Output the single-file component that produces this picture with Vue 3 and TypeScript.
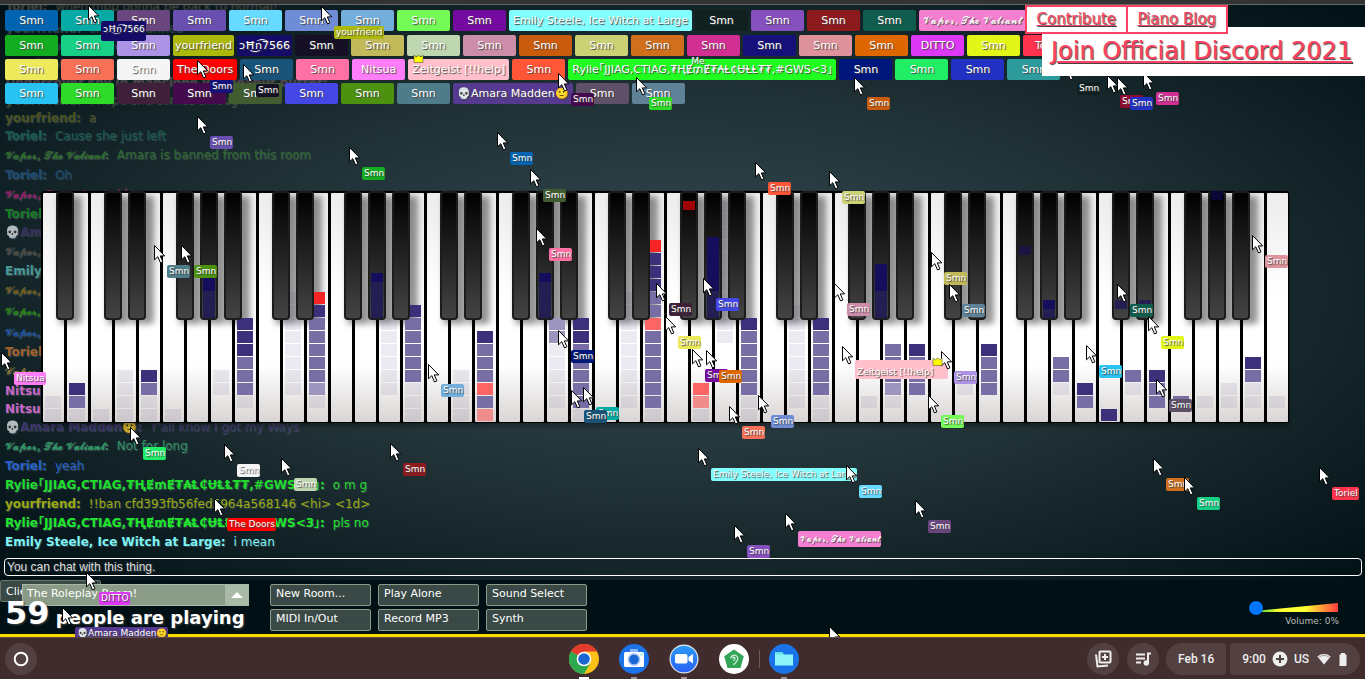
<script setup lang="ts">
interface Tag { t: string; c: string; k?: string }
interface Pointer { x: number; y: number; c?: string; t?: string; k?: string }
interface Line { n: string; m: string; c: string; k?: string }

const VAPOR = '𝓥𝓪𝓹𝓸𝓻, 𝓣𝓱𝓮 𝓥𝓪𝓵𝓲𝓪𝓷𝓽'
const RYLIE = 'Rylie｢JJIAG,CTIAG,₮ⱧɆ₥Ɇ₮₳Ⱡ₵ɄⱠⱠ₮₮,#GWS<3｣'
const EMILY = 'Emily Steele, Ice Witch at Large'
const AMARA = '💀Amara Madden🙂'
const SHN = 'ɔĦ͜n͡7566'

const smn = (list: string): Tag[] => list.split(' ').map((c) => ({ t: 'Smn', c: '#' + c }))

const rows: Tag[][] = [
  [
    ...smn('0264b0 05aaa4 6a467e 694fb0 67daff 6f8dd6 74afdb 75fb57 740aa0'),
    { t: EMILY, c: '#82ffff' },
    ...smn('10201e 8650bf 8d1a1d 0f5d4c'),
    { t: VAPOR, c: '#f47fd1', k: 'script' },
    ...smn('900b30'),
  ],
  [
    ...smn('12ad21 17cf85 ad93e5'),
    { t: 'yourfriend', c: '#acb90c', k: 'snug' },
    { t: SHN, c: '#140c66', k: 'snug' },
    ...smn('151025 c1b95a bed7b0 cb8da8 c95c0c cbd274 d1701c d22f93 15107a de939c df6700'),
    { t: 'DITTO', c: '#dd38f5' },
    ...smn('e2f718'),
    { t: 'Toriel', c: '#ff334d' },
  ],
  [
    ...smn('ece95c f87058 f5f5f5'),
    { t: 'The Doors', c: '#ff0000' },
    ...smn('195377 ff71a5'),
    { t: 'Nitsua', c: '#ff7df8' },
    { t: 'Zeitgeist [!!help]', c: '#ffc0cb', k: 'owner' },
    ...smn('ff5637'),
    { t: RYLIE, c: '#21ff21', k: 'me' },
    ...smn('00167a 21ed65 2230c4 2d9a9c'),
  ],
  [
    ...smn('28c3f2 2edb28 3e2138 450a4b 425c31 4447e6 4c9210 4e7c88'),
    { t: AMARA, c: '#553a8f' },
    ...smn('5e5167 608299'),
  ],
]

const p = (x: number, y: number, c: string, t = 'Smn', k = ''): Pointer => ({ x, y, c: '#' + c, t, k })
const pointers: Pointer[] = [
  p(88, 5, '140c66', SHN, 'tall'),
  p(321, 6, 'acb90c', 'yourfriend'),
  p(197, 60, '15107a'),
  p(243, 64, '151025'),
  p(197, 116, '694fb0'),
  p(349, 147, '12ad21'),
  p(558, 73, '450a4b'),
  p(636, 77, '2edb28'),
  p(854, 77, 'c95c0c'),
  p(497, 132, '0264b0'),
  p(530, 169, '425c31'),
  p(755, 162, 'ff5637'),
  p(829, 171, 'cbd274'),
  p(1064, 62, '10201e'),
  p(1107, 75, '900b30'),
  p(1117, 77, '2230c4'),
  p(1143, 72, 'd22f93'),
  p(154, 245, '4e7c88'),
  p(181, 245, '4c9210'),
  p(1, 352, 'ff7df8', 'Nitsua'),
  p(130, 427, '21ed65'),
  p(536, 228, 'ff71a5'),
  p(428, 364, '74afdb'),
  p(558, 330, '00167a'),
  p(583, 387, '05aaa4'),
  p(571, 390, '195377'),
  p(656, 283, '3e2138'),
  p(703, 278, '4447e6'),
  p(665, 316, 'ece95c'),
  p(692, 349, '740aa0'),
  p(706, 350, 'df6700'),
  p(729, 406, 'f87058'),
  p(758, 395, '6f8dd6'),
  p(834, 283, 'cb8da8'),
  p(842, 346, 'ffc0cb', 'Zeitgeist [!!help]', 'mod'),
  p(931, 252, 'c1b95a'),
  p(949, 284, '608299'),
  p(941, 351, 'ad93e5'),
  p(928, 395, '75fb57'),
  p(1117, 284, '0f5d4c'),
  p(1148, 316, 'e2f718'),
  p(1086, 345, '28c3f2'),
  p(1156, 379, '5e5167'),
  p(1252, 235, 'de939c'),
  p(224, 444, 'f5f5f5'),
  p(281, 458, 'bed7b0'),
  p(390, 443, '8d1a1d'),
  p(214, 498, 'ff0000', 'The Doors'),
  p(86, 572, 'dd38f5', 'DITTO'),
  p(62, 607, '553a8f', AMARA),
  p(698, 448, '82ffff', EMILY),
  p(846, 465, '67daff'),
  p(785, 513, 'f47fd1', VAPOR, 'script'),
  p(734, 525, '8650bf'),
  p(915, 500, '6a467e'),
  p(1153, 458, 'd1701c'),
  p(1184, 477, '17cf85'),
  p(1319, 467, 'ff334d', 'Toriel'),
  { x: 829, y: 626 },
]

const lines: Line[] = [
  { n: 'Toriel', m: 'when mpp gonna be back to normal!', c: 'rgba(90,75,50,.45)', k: 'gap' },
  { n: 'yourfriend', m: 'she got banned', c: 'rgba(40,110,80,.3)' },
  { n: 'Toriel', m: 'who banned her', c: 'rgba(60,70,160,.3)' },
  { n: 'yourfriend', m: 'I do not know', c: 'rgba(90,90,60,.3)' },
  { n: 'Undercover spy in manclone ver peanut butter', m: '', c: 'rgba(110,70,80,.45)' },
  { n: 'yourfriend', m: 'I hope she comes through', c: 'rgba(110,120,40,.4)' },
  { n: 'yourfriend', m: 'a', c: '#4a511c' },
  { n: 'Toriel', m: 'Cause she just left', c: '#165b50' },
  { n: VAPOR, m: 'Amara is banned from this room', c: '#2f6a2e', k: 'script' },
  { n: 'Toriel', m: 'Oh', c: '#1b4a73' },
  { n: VAPOR, m: 'I know', c: '#8b1f63', k: 'script' },
  { n: 'Toriel', m: 'ok', c: '#157d22' },
  { n: AMARA, m: 'hi', c: '#3c3368', k: 'faded' },
  { n: VAPOR, m: 'hi', c: '#4a4a42', k: 'script' },
  { n: EMILY, m: 'hi', c: '#4a9895' },
  { n: VAPOR, m: 'ok', c: '#6e5c1c', k: 'script' },
  { n: VAPOR, m: 'ok', c: '#2a8016', k: 'script' },
  { n: VAPOR, m: 'ok', c: '#22519e', k: 'script' },
  { n: 'Toriel', m: 'ok', c: '#a5602a' },
  { n: VAPOR, m: 'ok', c: '#85772f', k: 'script' },
  { n: 'Nitsua', m: 'ok', c: '#c765c4' },
  { n: 'Nitsua', m: 'ok', c: '#cb66c8' },
  { n: AMARA, m: "Y'all know I got my Ways", c: '#4a3a80', k: 'faded' },
  { n: VAPOR, m: 'Not for long', c: '#309363', k: 'script' },
  { n: 'Toriel', m: 'yeah', c: '#2561cc' },
  { n: RYLIE, m: 'o m g', c: '#1fdd2a', k: 'wide' },
  { n: 'yourfriend', m: '!!ban cfd393fb56fed5964a568146 <hi> <1d>', c: '#9ca80f' },
  { n: RYLIE, m: 'pls no', c: '#20e62b', k: 'wide' },
  { n: EMILY, m: 'i mean', c: '#7df3f4' },
]

// Note stacks per white key, listed from the bottom row upwards.
const stacks = [
  'ff', 'fmd', 'f', 'ffff', 'ffmd', 'f', '', '..ff', '.fmmmddd', '', '..ffffffff', '.flmmmmmdr',
  '', '', '..ffffff', 'fffmmmmmd', '', 'ffff', 'pmRmmmd', '', '', '.fffffll', 'fmmmmmdd', '',
  '.fffffffff', 'fmmmmmmRmmdddr', '', 'fpR', '......fffffffffff', 'ffmmmmmd', '', '.ffffffff',
  'ffmmmmmd', '', '.f', '.flmmm', '..mmmd', '', '..f', '..mmmd', '', '', '..fmm', '.md', 'd',
  '..fm', '.mmd', '.m', '.f', '.ff', '.ffmd', '.f',
]
const tone: Record<string, string> = {
  f: 'rgba(80,70,130,.11)', l: '#9c96bf', m: '#766ea4', d: '#3b3079', r: '#f62424', R: '#fb6566', p: '#f08c8c',
}
const notes = stacks.flatMap((s, i) =>
  [...s].map((ch, k) => ({ x: 4 + 24 * i, y: 219 - 13 * k, c: tone[ch] })).filter((n) => n.c),
)
const whites = Array.from({ length: 52 }, (_, i) => 2 + 24 * i)
const sharps = Array.from({ length: 51 }, (_, i) => i)
  .filter((i) => [0, 2, 3, 5, 6].includes(i % 7))
  .map((i) => 15 + 24 * i)
const LIT = '#140e5c'
const DIM = '#241f52'
const sharpNotes = [
  { i: 6, y: 88, h: 13, c: LIT }, { i: 6, y: 101, h: 27, c: DIM },
  { i: 13, y: 83, h: 9, c: LIT }, { i: 13, y: 92, h: 36, c: DIM },
  { i: 20, y: 83, h: 9, c: LIT }, { i: 20, y: 92, h: 36, c: DIM },
  { i: 26, y: 11, h: 9, c: '#a00404' },
  { i: 27, y: 47, h: 54, c: LIT }, { i: 27, y: 101, h: 27, c: DIM },
  { i: 34, y: 74, h: 27, c: LIT }, { i: 34, y: 101, h: 27, c: DIM },
  { i: 40, y: 56, h: 9, c: '#1a1440' },
  { i: 41, y: 110, h: 9, c: LIT }, { i: 41, y: 119, h: 9, c: DIM },
  { i: 44, y: 110, h: 9, c: DIM }, { i: 45, y: 110, h: 9, c: DIM },
  { i: 48, y: 1, h: 9, c: '#0a0636' },
]
const actions = ['New Room...', 'Play Alone', 'Sound Select', 'MIDI In/Out', 'Record MP3', 'Synth']
</script>

<template>
  <div class="page">
    <div class="edge"></div>
    <main class="room">
      <section class="log">
        <p v-for="(l, i) in lines" :key="i" :class="['line', l.k]" :style="{ color: l.c }">
          <b>{{ l.n }}:</b><span>{{ l.m }}</span>
        </p>
      </section>

      <section class="names">
        <div v-for="(r, i) in rows" :key="i" class="row">
          <div v-for="(n, j) in r" :key="j" :class="['name', n.k]" :style="{ background: n.c }">
            {{ n.t }}
            <svg v-if="n.k === 'owner'" class="crown" viewBox="0 0 11 9"><path d="M1 8.500V1l2.500 2L5.500.7 7.500 3 10 1v7.500z" fill="#ff0" stroke="#554" stroke-width=".6" /></svg>
            <span v-if="n.k === 'me'" class="over">Me</span>
          </div>
        </div>
      </section>

      <section class="piano">
        <svg viewBox="0 0 1250 240" role="img" aria-label="Piano keyboard">
          <defs>
            <linearGradient id="white" x1="0" y1="0" x2="0" y2="1">
              <stop offset="0" stop-color="#ececec" /><stop offset=".45" stop-color="#fff" />
              <stop offset=".75" stop-color="#fff" /><stop offset="1" stop-color="#dad5d5" />
            </linearGradient>
            <linearGradient id="black" x1="0" y1="0" x2="0" y2="1">
              <stop offset="0" stop-color="#000" /><stop offset=".5" stop-color="#222" /><stop offset="1" stop-color="#444" />
            </linearGradient>
            <filter id="soft" x="-50%" y="-10%" width="200%" height="120%"><feGaussianBlur stdDeviation="3" /></filter>
          </defs>
          <rect x="1" y="3" width="1248" height="232" rx="3" fill="#000" opacity=".45" filter="url(#soft)" />
          <rect x="0" y="1" width="1248" height="232" rx="3" fill="#000" />
          <rect v-for="x in whites" :key="x" :x="x" y="3" width="21" height="229" rx="1" fill="url(#white)" />
          <rect v-for="x in sharps" :key="x" :x="x + 3" y="6" width="23" height="128" rx="4" fill="#000" opacity=".42" filter="url(#soft)" />
          <rect v-for="(n, i) in notes" :key="i" :x="n.x" :y="n.y" width="16" height="12" :fill="n.c" />
          <rect v-for="x in sharps" :key="x" :x="x + 1" y="2" width="16" height="127" rx="3" fill="url(#black)" stroke="#1c1c1c" stroke-width="2" />
          <rect v-for="(n, i) in sharpNotes" :key="i" :x="18 + 24 * n.i" :y="n.y" width="12" :height="n.h" :fill="n.c" />
        </svg>
      </section>

      <form class="chat" @submit.prevent>
        <input type="text" value="You can chat with this thing." aria-label="Chat message" />
      </form>
    </main>

    <footer class="bottom">
      <button class="client">Client Settings</button>
      <div class="status">
        <button class="select"><span>The Roleplay Room!</span><i></i></button>
        <p><strong>59</strong> people are playing</p>
      </div>
      <div class="actions">
        <button v-for="a in actions" :key="a">{{ a }}</button>
      </div>
      <div class="volume">
        <div class="track">
          <svg viewBox="0 0 83 9" preserveAspectRatio="none">
            <defs><linearGradient id="vol"><stop offset="0" stop-color="#3c3" /><stop offset=".3" stop-color="#ff3" /><stop offset=".6" stop-color="#ff3" /><stop offset="1" stop-color="#ff3d3d" /></linearGradient></defs>
            <path d="M0 9V8L83 0V9z" fill="url(#vol)" />
          </svg>
          <input id="volume" type="range" min="0" max="100" value="0" />
        </div>
        <label for="volume">Volume: 0%</label>
      </div>
    </footer>

    <nav class="shelf">
      <button class="round" aria-label="Launcher"><svg viewBox="0 0 32 32"><circle cx="16" cy="16" r="6.300" fill="none" stroke="#fff" stroke-width="2" /></svg></button>
      <div class="apps">
        <button class="app on" aria-label="Chrome">
          <svg viewBox="0 0 30 30"><circle cx="15" cy="15" r="15" fill="#fbc116" /><path d="M15 15 2 7.500A15 15 0 0 1 28 7.500H15z" fill="#e33b2e" /><path d="M2 7.500A15 15 0 0 0 15 30l6.500-11.200L15 15z" fill="#2da94f" /><circle cx="15" cy="15" r="7.300" fill="#fff" /><circle cx="15" cy="15" r="5.800" fill="#1a67d2" /></svg>
        </button>
        <button class="app" aria-label="Camera">
          <svg viewBox="0 0 30 30"><circle cx="15" cy="15" r="15" fill="#1a73e8" /><path d="M11 5h8v4h-8z" fill="#8ab4f8" /><rect x="5" y="8" width="20" height="15" rx="1.500" fill="#fff" /><circle cx="15" cy="15.500" r="6.400" fill="#a8c7fa" /><circle cx="15" cy="15.500" r="4.800" fill="#1967d2" /><circle cx="22.500" cy="10.500" r="1" fill="#4fe3e8" /></svg>
        </button>
        <button class="app" aria-label="Zoom">
          <svg viewBox="0 0 30 30"><defs><linearGradient id="zm" x1="0" y1="0" x2="0" y2="1"><stop offset="0" stop-color="#2a9bf5" /><stop offset="1" stop-color="#2962f6" /></linearGradient></defs><circle cx="15" cy="15" r="14.500" fill="#e8e8e8" /><circle cx="15" cy="15" r="13.300" fill="url(#zm)" /><rect x="6" y="10" width="12.500" height="9.500" rx="2" fill="#fff" /><path d="m19.500 13 4.500-3v9.500l-4.500-3z" fill="#fff" /></svg>
        </button>
        <button class="app idle" aria-label="Listening">
          <svg viewBox="0 0 30 30"><circle cx="15" cy="15" r="15" fill="#fff" /><path d="m15 5.500 9.800 6.800L21.500 24h-13L5.200 12.300z" fill="#32a456" /><path d="M11.800 14.500a3.500 3.500 0 1 1 6 2.500c-1.300 1.300-1.300 3.500-3.800 3.500M13.700 14.500c.5-2 2.500-1.500 2.300.2-.2 1-1.500 1.300-1 2.300" fill="none" stroke="#d9f3e0" stroke-width="1.200" /></svg>
        </button>
        <hr />
        <button class="app" aria-label="Files">
          <svg viewBox="0 0 30 30"><circle cx="15" cy="15" r="15" fill="#1a73e8" /><path d="M6 8h7l2 2.500h9v11H6z" fill="#8ff5f9" /><path d="M6 8h7l2 2.500H6z" fill="#62dfea" /></svg>
        </button>
      </div>
      <div class="tray">
        <button class="round" aria-label="Add desk"><svg viewBox="0 0 32 32" fill="none" stroke="#eee" stroke-width="2"><rect x="12.500" y="8.500" width="11" height="11" rx="1" /><path d="M18 11v6M15 14h6M9 11.500l1.500 12 10.500-1" /></svg></button>
        <button class="round" aria-label="Media"><svg viewBox="0 0 32 32" fill="none" stroke="#eee" stroke-width="2"><path d="M9 11.500h9M9 15.500h9M9 19.500h5" /><path d="M21 20v-9.500h3" /><circle cx="19.300" cy="20" r="1.700" fill="#eee" /></svg></button>
        <button class="pill date">Feb 16</button>
        <button class="pill time"><span>9:00</span>
          <svg class="plus" viewBox="0 0 16 16"><circle cx="8" cy="8" r="7.500" fill="#eee" /><path d="M8 4v8M4 8h8" stroke="#514040" stroke-width="2" /></svg>
          <span>US</span>
          <svg class="wifi" viewBox="0 0 14 12"><path d="M7 11.500.3 3.500a10.500 10.500 0 0 1 13.400 0z" fill="#eee" /><path d="M1.500 4.500a9 9 0 0 1 11 0" fill="none" stroke="#998c8c" stroke-width=".8" /></svg>
          <svg class="battery" viewBox="0 0 8 13"><path d="M2 0h4v1.500h1.500V13H.5V1.500H2z" fill="#eee" /></svg>
        </button>
      </div>
    </nav>

    <div class="pointers">
      <div v-for="(c, i) in pointers" :key="i" class="pointer" :style="{ left: c.x + 'px', top: c.y + 'px' }">
        <svg viewBox="0 0 12 19"><path d="M.5.500v14.300l3.300-3.100 2.700 6.200 2.400-1-2.600-6h4.400z" fill="#fff" stroke="#000" /></svg>
        <span v-if="c.t" :class="c.k" :style="{ background: c.c }">{{ c.t }}</span>
      </div>
      <svg class="crown loose" viewBox="0 0 11 9"><path d="M1 8.500V1l2.500 2L5.500.7 7.500 3 10 1v7.500z" fill="#ff0" stroke="#554" stroke-width=".6" /></svg>
    </div>

    <div class="links">
      <div class="small"><a href="#contribute">Contribute</a><a href="#blog">Piano Blog</a></div>
      <a class="big" href="#discord">Join Official Discord 2021</a>
    </div>
  </div>
</template>

<style>
body { margin: 0; background: #001014; }
</style>

<style scoped>
* { box-sizing: border-box; }
p { margin: 0; }
button { font: inherit; color: inherit; border: 0; padding: 0; margin: 0; background: none; text-shadow: inherit; }
.page {
  position: relative; min-height: 100vh; display: flex; flex-direction: column; overflow: hidden;
  font-family: "DejaVu Sans", "Noto Sans", "Noto Sans CJK JP", sans-serif; color: #fff;
}
.edge { height: 5px; background: #333; border-bottom: 1px solid #666; }
.room {
  flex: 1; display: grid; grid-template-rows: minmax(0, 1fr) 22px; grid-template-columns: minmax(0, 1fr);
  background: radial-gradient(ellipse farthest-corner at center, #344b50 0%, #203136 50%, #001014 100%);
}
.log, .names, .piano { grid-area: 1 / 1; position: relative; }
.log {
  display: flex; flex-direction: column; justify-content: flex-end; height: 0; min-height: 100%;
  overflow: hidden; padding: 0 5px 7px; font-size: 12px; white-space: nowrap;
}
.line { flex: none; line-height: 18px; height: 18px; text-shadow: 1px 1px 1px rgba(140, 150, 150, .35); }
.line b { margin-right: 8px; }
.line.script { height: 21px; line-height: 21px; }
.line.script b { font-size: 10px; }
.line.gap { margin-bottom: 4px; }
.line.wide { height: 20px; line-height: 20px; }
.line.faded { opacity: .8; }
.names { padding: 5px 5px 0; display: flex; flex-direction: column; gap: 3px; align-items: flex-start; }
.row { display: flex; gap: 3px; }
.name {
  position: relative; flex: none; min-width: 53px; height: 21px; padding: 0 4px; border-radius: 2px;
  font-size: 11px; line-height: 21px; text-align: center; white-space: nowrap; text-shadow: 1px 1px 1px #444;
}
.row + .row { margin-top: 1px; }
.row + .row + .row { margin-top: 0; }
.name.snug { padding: 0 2px; }
.name.script { font-size: 10px; }
.crown { position: absolute; left: 5px; top: -5px; width: 11px; height: 9px; }
.crown.loose { left: 932px; top: 357px; }
.over { position: absolute; left: 123px; top: -7px; font-size: 9px; line-height: 18px; }
.piano { padding: 185px 74px 0 41px; }
.piano svg { display: block; width: 100%; }
.chat { grid-area: 2 / 1; padding: 0 3px 4px 4px; display: flex; }
.chat input {
  width: 100%; height: 18px; padding: 0 2px; border: 1px solid #fff; border-radius: 4px; background: none;
  font: 12px "Liberation Sans", Arial, sans-serif; color: #ddd; text-shadow: 1px 1px 1px #444;
}
.bottom { position: relative; height: 57px; display: flex; background: #001014; border-bottom: 3px solid #ffdc00; font-size: 11px; }
.client {
  position: absolute; left: 0; top: 0; width: 101px; height: 22px; padding-left: 5px; text-align: left;
  background: #3a4946; border: 1px solid #67776c; border-radius: 2px;
}
.status { position: relative; width: 249px; padding: 4px 0 0 22px; margin-right: 21px; }
.select { display: flex; width: 100%; height: 22px; background: #8a9c87; border: 1px solid #a8baa7; text-align: left; line-height: 18px; padding-left: 4px; }
.select span { flex: 1; }
.select i { width: 23px; background: #a8baa7; height: 20px; display: grid; place-items: center; }
.select i::after { content: ""; border: 6px solid transparent; border-top: 0; border-bottom-color: #fff; }
.status p { position: absolute; left: 5px; top: 13px; font-size: 18px; line-height: 40px; font-weight: bold; white-space: nowrap; text-shadow: 1px 1px 2px #444; }
.status strong { font-size: 32px; }
.actions { display: grid; grid-template-columns: repeat(3, 101px); grid-auto-rows: 22px; gap: 3px 7px; padding-top: 4px; }
.actions button { background: #3a4946; border: 1px solid #8a9c87; border-radius: 2px; text-align: left; padding: 0 5px 3px; line-height: 16px; }
.volume { margin-left: auto; width: 90px; margin-right: 26px; padding-top: 17px; font-size: 9px; color: #bbb; text-align: right; }
.volume label { display: block; line-height: 14px; }
.track { position: relative; height: 17px; }
.track svg { position: absolute; right: 1px; top: 6px; width: 83px; height: 9px; }
.track input { position: absolute; left: 0; top: 3px; width: 90px; height: 15px; margin: 0; appearance: none; background: none; }
.track input::-webkit-slider-thumb { appearance: none; width: 14px; height: 14px; border-radius: 50%; background: #0075ff; }
.shelf {
  position: relative; height: 42px; display: flex; align-items: center; justify-content: space-between; padding: 1px 5px 0;
  background: #402c2c; border-top: 1px solid #5c4a4a; font: 500 12px Roboto, sans-serif; color: #eee; z-index: 2;
}
.round { width: 32px; height: 32px; border-radius: 50%; background: #534141; }
.round svg { display: block; width: 32px; height: 32px; }
.apps { position: absolute; left: 0; right: 0; top: 0; height: 41px; padding-left: 2px; display: flex; align-items: center; justify-content: center; gap: 20px; }
.app { position: relative; width: 30px; height: 41px; display: flex; align-items: center; }
.app svg { width: 30px; height: 30px; }
.app::after { content: ""; position: absolute; left: 12px; bottom: 0; width: 6px; height: 2px; background: #9a8e8e; }
.app.on::after { left: 10px; width: 10px; background: #fff; }
.app.idle::after { display: none; }
.apps hr { width: 1px; height: 18px; margin: 0 -11px 0 -10px; border: 0; background: #6b5a5a; }
.tray { display: flex; align-items: center; gap: 4px; }
.tray .round + .round { margin: 0 3px 0 4px; }
.pill { height: 32px; background: #534141; display: flex; align-items: center; }
.date { padding: 0 12px; border-radius: 16px 4px 4px 16px; }
.time { padding: 0 13px 0 12px; gap: 6px; border-radius: 4px 16px 16px 4px; }
.plus { width: 16px; height: 16px; }
.wifi { width: 14px; height: 12px; margin-left: 2px; }
.battery { width: 8px; height: 13px; margin-left: 2px; }
.pointers { position: absolute; inset: 0 0 42px; overflow: hidden; z-index: 1; pointer-events: none; }
.pointer { position: absolute; }
.pointer svg { position: absolute; left: 0; top: 0; width: 12px; height: 19px; }
.pointer span {
  position: absolute; left: 13px; top: 20px; height: 13px; padding: 0 1px 0 2px; border-radius: 2px;
  font-size: 9px; line-height: 13px; white-space: nowrap; text-shadow: 1px 1px 1px #444;
}
.pointer .tall { top: 16px; height: 20px; line-height: 17px; }
.pointer .mod { top: 14px; height: 19px; line-height: 24px; padding-right: 15px; }
.pointer .script { top: 18px; height: 16px; line-height: 17px; font-size: 8px; }
.links { position: absolute; right: 0; top: 5px; width: 340px; z-index: 3; }
.links a { color: #ff4263; text-shadow: 1px 1px 1px #444; white-space: nowrap; }
.small { position: relative; z-index: 1; display: flex; width: 203px; background: #fff; border: 2px solid #ff4263; }
.small a { flex: 1; height: 25px; padding: 0 9px; font-size: 15px; line-height: 24px; text-align: center; }
.small a + a { border-left: 2px solid #ff4263; }
.big { display: block; margin: -7px 0 0 17px; height: 49px; padding: 0 9px; background: #fff; font-size: 24px; line-height: 48px; }
</style>
